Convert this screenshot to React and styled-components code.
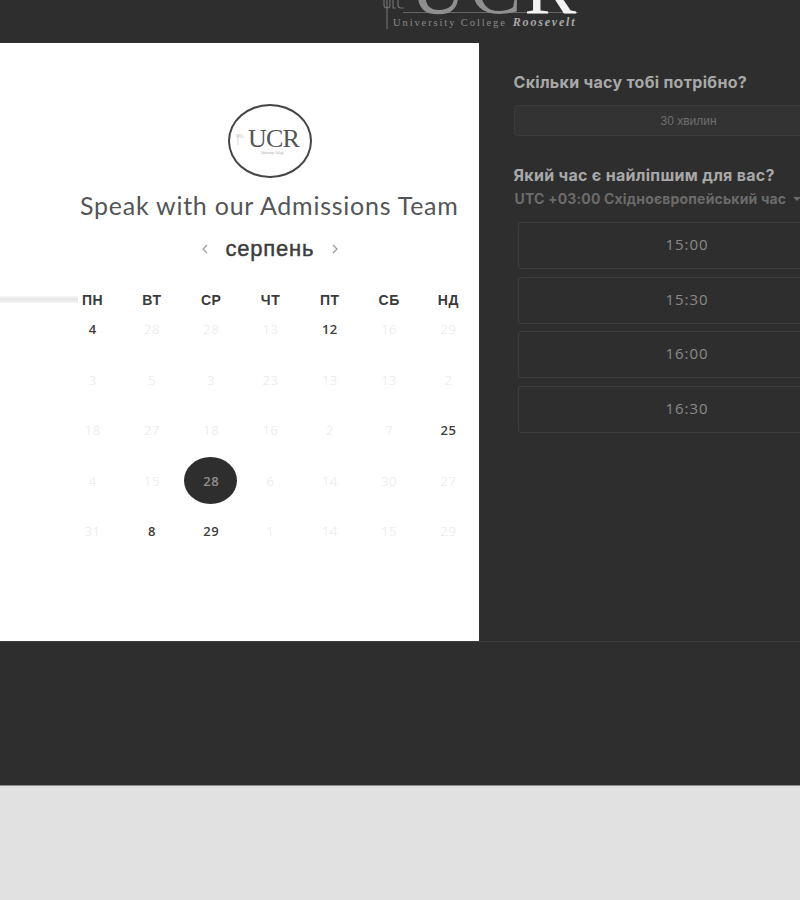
import React from 'react'
import styled, { createGlobalStyle } from 'styled-components'

const Global = createGlobalStyle`
  html, body { margin: 0; padding: 0; background: #e1e1e1; }
  body { font-family: "Liberation Sans", Arial, sans-serif; overflow: hidden; }
`

const Page = styled.div`
  width: 800px;
  height: 900px;
  overflow: hidden;
  background: #e1e1e1;
`
const Dark = styled.div`
  height: 786px;
  background: #2e2e2e;
  border-bottom: 1px solid #8a8a8a;
  box-sizing: border-box;
`
const Header = styled.header`
  height: 43px;
  display: flex;
  justify-content: flex-start;
  align-items: flex-end;
  padding-left: 382px;
  overflow: hidden;
`
const Logo = styled.div`
  position: relative;
  width: 196px;
  flex: none;
  padding-bottom: 14px;
`
const BigMark = styled.div`
  height: 13px;
  display: flex;
  align-items: flex-end;
  margin-left: 21px;
  padding-left: 7px;
  border-bottom: 1px solid #666;
  line-height: 0;
  font-family: "Liberation Serif", serif;
  font-size: 78px;
  letter-spacing: 3px;
  color: #8f8f8f;
  span { color: #f2f2f2; letter-spacing: 0; }
  div { transform: translateY(-25px); white-space: nowrap; }
`
const Caption = styled.div`
  display: flex;
  align-items: baseline;
  margin: 3px 0 0 11px;
  font-family: "Liberation Serif", serif;
  font-size: 10.5px;
  line-height: 12px;
  letter-spacing: 1.9px;
  color: #8a8a8a;
  white-space: nowrap;
  b {
    margin-left: 6px;
    font-style: italic;
    font-size: 12px;
    letter-spacing: 1.8px;
    color: #a8a8a8;
  }
`
const TowerSlot = styled.div`
  position: absolute;
  left: 0;
  bottom: 14px;
  line-height: 0;
`
const Main = styled.main`
  height: 599px;
  display: flex;
  border-bottom: 1px solid #3d3d3d;
  box-sizing: border-box;
`
const Left = styled.section`
  width: 479px;
  flex: none;
  background: #fff;
  padding-top: 61px;
  display: flex;
  flex-direction: column;
  box-sizing: border-box;
`
const Badge = styled.div`
  align-self: center;
  margin-left: 60px;
  width: 84px;
  height: 74px;
  box-sizing: border-box;
  border: 2.5px solid #454545;
  border-radius: 50%;
  position: relative;
  display: flex;
  flex-direction: column;
  align-items: center;
  justify-content: center;
`
const BadgeMark = styled.div`
  font-family: "Liberation Serif", serif;
  font-size: 26px;
  line-height: 25px;
  letter-spacing: -0.8px;
  margin: -2px 0 0 8px;
  color: #555;
`
const BadgeTiny = styled.div`
  font-family: "Liberation Serif", serif;
  font-size: 3px;
  line-height: 4px;
  color: #999;
  margin-left: 6px;
`
const BadgeTowerSlot = styled.div`
  position: absolute;
  left: 6px;
  top: 28px;
  line-height: 0;
`
const Title = styled.h1`
  margin: 12px 0 0;
  padding-left: 80px;
  font-family: Lato, sans-serif;
  font-weight: 400;
  font-size: 25px;
  line-height: 30px;
  letter-spacing: 0.75px;
  color: #555;
  white-space: nowrap;
`
const MonthRow = styled.div`
  display: flex;
  align-items: center;
  justify-content: center;
  margin: 16px 0 0 60px;
  height: 26px;
  gap: 17px;
`
const Month = styled.div`
  font-size: 22px;
  letter-spacing: 0.8px;
  -webkit-text-stroke: 0.45px #3d3d3d;
  color: #3d3d3d;
  width: 88px;
  text-align: center;
  white-space: nowrap;
`
const Grid = styled.div`
  position: relative;
  display: grid;
  grid-template-columns: repeat(7, 59.3px);
  padding-left: 63px;
  margin-top: 32px;
`
const Bar = styled.div`
  position: absolute;
  left: 0;
  top: 2px;
  width: 78px;
  height: 7px;
  background: linear-gradient(#f6f6f6, #e6e6e6 50%, #f6f6f6);
`
const WeekDay = styled.div`
  height: 10px;
  text-align: center;
  font-size: 14px;
  line-height: 12px;
  font-weight: 700;
  letter-spacing: 0.6px;
  color: #3a3a3a;
`
const Day = styled.div`
  height: 50.5px;
  display: flex;
  align-items: center;
  justify-content: center;
  font-family: "Open Sans", sans-serif;
  font-size: 13px;
  letter-spacing: 0.5px;
  font-weight: ${p => (p.$on ? 600 : 300)};
  color: ${p => (p.$on ? '#404040' : '#e6e6e6')};
`
const Selected = styled.span`
  width: 53px;
  height: 47px;
  flex: none;
  margin-right: 2px;
  padding-left: 2px;
  box-sizing: border-box;
  border-radius: 50%;
  background: #2e2e2e;
  color: #8f8f8f;
  font-weight: 600;
  display: flex;
  align-items: center;
  justify-content: center;
`
const Right = styled.section`
  flex: none;
  width: 400px;
  padding: 30px 0 0 34.5px;
  box-sizing: border-box;
`
const Question = styled.h2`
  margin: 0;
  font-family: Inter, sans-serif;
  font-size: 16px;
  line-height: 18px;
  font-weight: 700;
  letter-spacing: 0.3px;
  color: #a8a8a8;
  white-space: nowrap;
`
const Duration = styled.div`
  width: 350px;
  height: 31px;
  margin: 14px 0 30px;
  border: 1px solid #3b3b3b;
  border-radius: 3px;
  background: #333;
  box-sizing: border-box;
  display: flex;
  align-items: center;
  justify-content: center;
  font-size: 12px;
  color: #6f6f6f;
`
const Zone = styled.div`
  display: flex;
  align-items: center;
  gap: 7px;
  margin: 6px 0 0 1px;
  font-family: Inter, sans-serif;
  font-size: 14px;
  line-height: 18px;
  font-weight: 700;
  letter-spacing: 0.17px;
  color: #6b6b6b;
  white-space: nowrap;
`
const Caret = styled.i`
  width: 0;
  height: 0;
  border: 4px solid transparent;
  border-top-color: #6b6b6b;
  border-bottom: 0;
`
const Slots = styled.div`
  display: flex;
  flex-direction: column;
  gap: 7.5px;
  margin: 14px 0 0 4px;
`
const Slot = styled.div`
  width: 339px;
  height: 47px;
  box-sizing: border-box;
  border: 1px solid #3f3f3f;
  border-radius: 3px;
  padding-bottom: 3px;
  display: flex;
  align-items: center;
  justify-content: center;
  font-family: "Open Sans", sans-serif;
  font-size: 15px;
  letter-spacing: 1px;
  color: #8a8a8a;
`

const weekDays = ['ПН', 'ВТ', 'СР', 'ЧТ', 'ПТ', 'СБ', 'НД']
const days = [
  4, 28, 28, 13, 12, 16, 29,
  3, 5, 3, 23, 13, 13, 2,
  18, 27, 18, 16, 2, 7, 25,
  4, 15, 28, 6, 14, 30, 27,
  31, 8, 29, 1, 14, 15, 29,
]
const activeIdx = [0, 4, 20, 29, 30]
const selectedIdx = 23
const slots = ['15:00', '15:30', '16:00', '16:30']

function TowerIcon({ width, height, color }) {
  return (
    <svg width={width} height={height} viewBox="0 0 24 30" fill="none" stroke={color} strokeWidth="1.2">
      <path d="M5 30V0M2 0v6q0 3 3 3M8 0v6q0 3-3 3M11 0v9h3M16 0v6q0 3 3 3h3" />
    </svg>
  )
}

export default function App() {
  return (
    <Page>
      <Global />
      <Dark>
        <Header>
          <Logo>
            <TowerSlot><TowerIcon width={24} height={30} color="#6e6e6e" /></TowerSlot>
            <BigMark><div>UC<span>R</span></div></BigMark>
            <Caption>University College<b>Roosevelt</b></Caption>
          </Logo>
        </Header>
        <Main>
          <Left>
            <Badge>
              <BadgeTowerSlot><TowerIcon width={9} height={11} color="#aaa" /></BadgeTowerSlot>
              <BadgeMark>UCR</BadgeMark>
              <BadgeTiny>University College</BadgeTiny>
            </Badge>
            <Title>Speak with our Admissions Team</Title>
            <MonthRow>
              <svg width="8" height="10" viewBox="0 0 8 10" fill="none" stroke="#999" strokeWidth="1.2"><path d="M6 1 2 5l4 4" /></svg>
              <Month>серпень</Month>
              <svg width="8" height="10" viewBox="0 0 8 10" fill="none" stroke="#999" strokeWidth="1.2"><path d="m2 1 4 4-4 4" /></svg>
            </MonthRow>
            <Grid>
              <Bar />
              {weekDays.map(d => <WeekDay key={d}>{d}</WeekDay>)}
              {days.map((d, i) => (
                <Day key={i} $on={activeIdx.includes(i)}>
                  {i === selectedIdx ? <Selected>{d}</Selected> : d}
                </Day>
              ))}
            </Grid>
          </Left>
          <Right>
            <Question>Скільки часу тобі потрібно?</Question>
            <Duration>30 хвилин</Duration>
            <Question>Який час є найліпшим для вас?</Question>
            <Zone>UTC +03:00 Східноєвропейський час <Caret /></Zone>
            <Slots>
              {slots.map(s => <Slot key={s}>{s}</Slot>)}
            </Slots>
          </Right>
        </Main>
      </Dark>
    </Page>
  )
}
